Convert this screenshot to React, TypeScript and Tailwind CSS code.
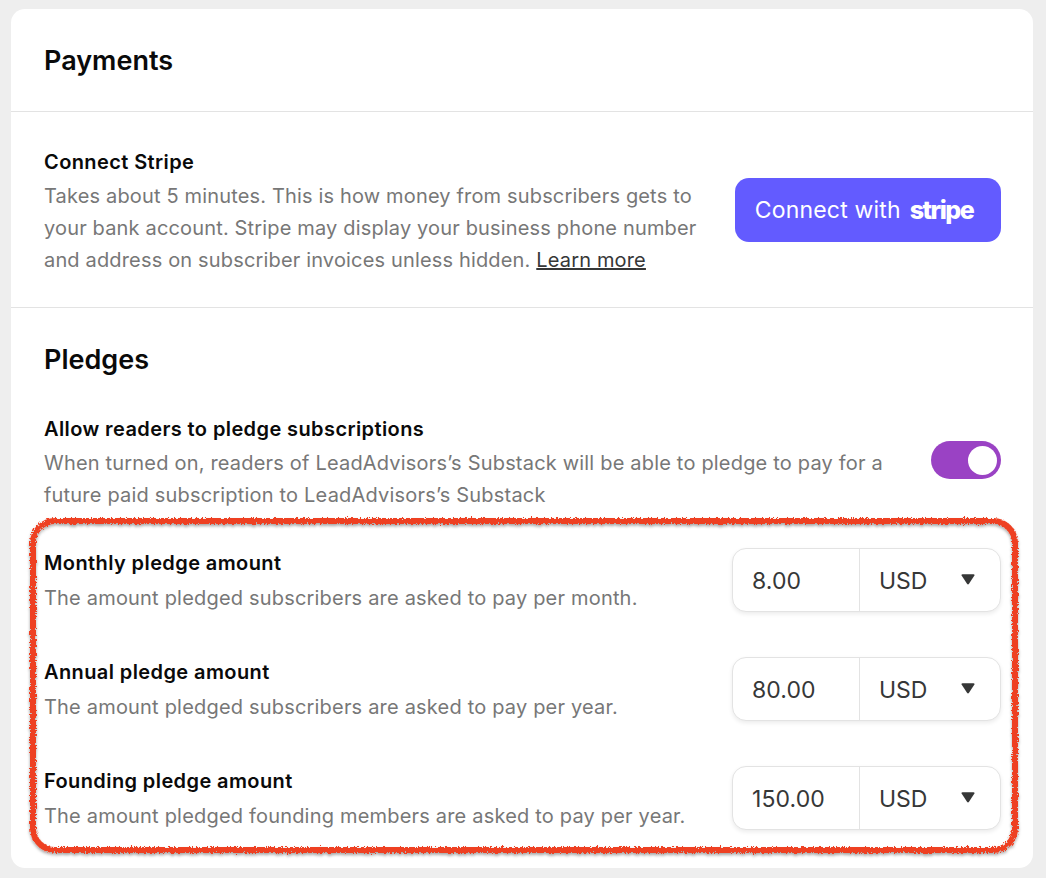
const Row = ({ title, desc, value }: { title: string; desc: string; value: string }) => (
  <div className="flex h-[109px] items-start justify-between">
    <div className="pt-[2px]">
      <div className="text-[20px] leading-[26px] font-semibold tracking-[0.4px] text-[#0a0a0a]">{title}</div>
      <div className="mt-[6px] text-[20px] leading-[32px] tracking-[0.19px] text-[#777777]">{desc}</div>
    </div>
    <div className="flex h-[64px] w-[269px] rounded-[14px] border border-[#e3e3e3] bg-white shadow-[0_2px_4px_rgba(0,0,0,0.08)]">
      <div className="flex w-[127px] items-center border-r border-[#e3e3e3] pt-[2px] pl-[19px] text-[23px] tracking-[0.1px] text-[#363737]">{value}</div>
      <div className="flex flex-1 items-center justify-between pt-[2px] pr-[25px] pl-[19px] text-[23px] text-[#363737]">
        <span>USD</span>
        <svg width="14" height="11" viewBox="0 0 14 11" className="mb-[4px]">
          <path d="M0.6 1.6 Q0.2 0.2 1.6 0.2 H12.4 Q13.8 0.2 13.4 1.6 L8 9.8 Q7 11 6 9.8 Z" fill="#363737" />
        </svg>
      </div>
    </div>
  </div>
);

export default function App() {
  return (
    <div className="relative h-[878px] w-[1046px] overflow-hidden bg-[#eeeeee] pt-[9px] pl-[11px] font-['Inter',sans-serif]">
      <div className="h-[859px] w-[1022px] rounded-[14px] bg-white">
        <div className="flex h-[103px] items-center border-b border-[#e3e3e3] px-[33px] pt-[2px]">
          <h1 className="text-[27px] font-semibold text-[#0a0a0a]">Payments</h1>
        </div>
        <div className="flex h-[196px] items-center justify-between border-b border-[#e3e3e3] pr-[32px] pl-[33px]">
          <div className="w-[670px] pt-[6px]">
            <div className="text-[20px] leading-[26px] font-semibold tracking-[0.4px] text-[#0a0a0a]">Connect Stripe</div>
            <div className="mt-[5px] text-[20px] leading-[32px] tracking-[0.16px] text-[#777777]">
              Takes about 5 minutes. This is how money from subscribers gets to your bank account. Stripe may display your business phone number and address on subscriber invoices unless hidden.{" "}
              <span className="text-[#363737] underline">Learn more</span>
            </div>
          </div>
          <div className="flex h-[64px] w-[266px] items-center justify-center rounded-[14px] bg-[#635bff] pr-[8px] pt-[2px] text-[23px] tracking-[0.17px] text-white">
            <span>Connect with</span>
            <span className="ml-[9px] text-[25px] font-extrabold tracking-[-1.5px]">stripe</span>
          </div>
        </div>
        <div className="pr-[32px] pl-[33px]">
          <h2 className="pt-[32px] text-[27px] leading-[40px] font-semibold text-[#0a0a0a]">Pledges</h2>
          <div className="mt-[36px] flex items-start justify-between">
            <div className="w-[860px]">
              <div className="text-[20px] leading-[26px] font-semibold tracking-[0.4px] text-[#0a0a0a]">Allow readers to pledge subscriptions</div>
              <div className="mt-[5px] text-[20px] leading-[32px] tracking-[0.19px] text-[#777777]">
                When turned on, readers of LeadAdvisors’s Substack will be able to pledge to pay for a future paid subscription to LeadAdvisors’s Substack
              </div>
            </div>
            <div className="mt-[25px] flex h-[38px] w-[70px] items-center justify-end rounded-full bg-[#9a42c4] pr-[4px]">
              <div className="h-[29px] w-[29px] rounded-full bg-white" />
            </div>
          </div>
          <div className="mt-[37px]">
            <Row title="Monthly pledge amount" desc="The amount pledged subscribers are asked to pay per month." value="8.00" />
            <Row title="Annual pledge amount" desc="The amount pledged subscribers are asked to pay per year." value="80.00" />
            <Row title="Founding pledge amount" desc="The amount pledged founding members are asked to pay per year." value="150.00" />
          </div>
        </div>
      </div>
      <svg className="pointer-events-none absolute top-0 left-0" width="1046" height="878" viewBox="0 0 1046 878">
        <defs>
          <filter id="rough" x="-5%" y="-5%" width="110%" height="110%">
            <feTurbulence type="fractalNoise" baseFrequency="0.55" numOctaves="3" seed="4" result="n" />
            <feDisplacementMap in="SourceGraphic" in2="n" scale="5" result="d" />
            <feDropShadow dx="0" dy="2" stdDeviation="1.5" floodColor="#000000" floodOpacity="0.35" />
          </filter>
        </defs>
        <rect x="33" y="521" width="982" height="329" rx="22" fill="none" stroke="#ee4023" strokeWidth="6" filter="url(#rough)" />
      </svg>
    </div>
  );
}
